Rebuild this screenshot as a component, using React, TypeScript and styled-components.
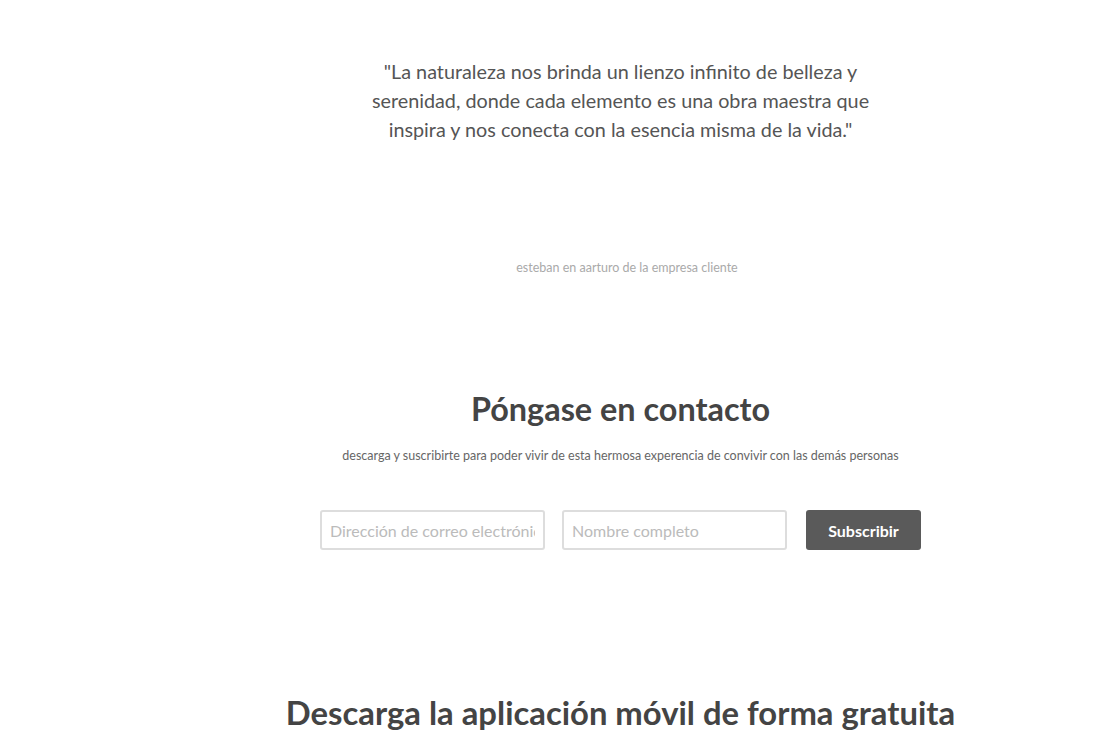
import styled, { createGlobalStyle } from "styled-components";

const Global = createGlobalStyle`
  html, body {
    margin: 0;
    padding: 0;
    background: #fff;
    font-family: Lato, "Open Sans", sans-serif;
  }
  * { box-sizing: border-box; }
`;

// page shifted right: content centres around x≈620
const Page = styled.div`
  padding-left: 128px;
  display: flex;
  flex-direction: column;
  align-items: center;
`;

const Testimonial = styled.section`
  display: flex;
  flex-direction: column;
  align-items: center;
  padding-top: 57px;
`;

const Quote = styled.p`
  margin: 0;
  width: 530px;
  text-align: center;
  font-size: 19.8px;
  line-height: 29px;
  color: #555;
`;

const Author = styled.p`
  margin: 116px 0 0 13px;
  font-size: 12.5px;
  line-height: 16px;
  color: #aaa;
`;

const Contact = styled.section`
  display: flex;
  flex-direction: column;
  align-items: center;
  margin-top: 113px;
`;

const Title = styled.h2<{ $size: number }>`
  margin: 0;
  font-size: ${(p) => p.$size}px;
  line-height: 40px;
  font-weight: 700;
  color: #444;
`;

const Subtitle = styled.p`
  margin: 19px 0 0;
  font-size: 12.5px;
  line-height: 16px;
  color: #666;
`;

const Form = styled.form`
  display: flex;
  align-items: center;
  margin-top: 46px;
`;

const Field = styled.input`
  width: 225px;
  height: 40px;
  margin-right: 17px;
  padding: 0 8px;
  border: 2px solid #ddd;
  border-radius: 3px;
  font-family: inherit;
  font-size: 16px;
  color: #555;
  &::placeholder { color: #bbb; }
  &:focus { outline: none; }
`;

const Button = styled.button`
  margin-left: 2px;
  width: 115px;
  height: 40px;
  border: none;
  border-radius: 3px;
  background: #5a5a5a;
  color: #fff;
  font-family: inherit;
  font-size: 16px;
  font-weight: 700;
`;

const AppSection = styled.section`
  margin-top: 143px;
`;

export default function App() {
  return (
    <>
      <Global />
      <Page>
        <Testimonial>
          <Quote>
            "La naturaleza nos brinda un lienzo infinito de belleza y serenidad,
            donde cada elemento es una obra maestra que inspira y nos conecta con
            la esencia misma de la vida."
          </Quote>
          <Author>esteban en aarturo de la empresa cliente</Author>
        </Testimonial>
        <Contact>
          <Title $size={32.4}>Póngase en contacto</Title>
          <Subtitle>
            descarga y suscribirte para poder vivir de esta hermosa experencia de
            convivir con las demás personas
          </Subtitle>
          <Form onSubmit={(e) => e.preventDefault()}>
            <Field type="email" placeholder="Dirección de correo electrónico" />
            <Field type="text" placeholder="Nombre completo" />
            <Button type="submit">Subscribir</Button>
          </Form>
        </Contact>
        <AppSection>
          <Title $size={32.8}>Descarga la aplicación móvil de forma gratuita</Title>
        </AppSection>
      </Page>
    </>
  );
}
